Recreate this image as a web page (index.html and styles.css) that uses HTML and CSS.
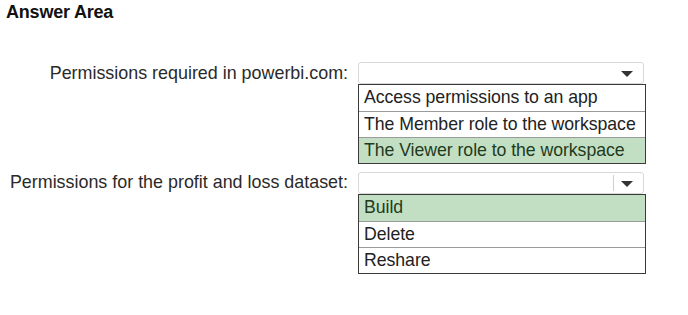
FILE: index.html
```html
<!DOCTYPE html>
<html>
<head>
<meta charset="utf-8">
<link rel="stylesheet" href="styles.css">
</head>
<body>
<h1 class="title">Answer Area</h1>
<div class="qa">
  <div class="question q1">
    <div class="label">Permissions required in powerbi.com:</div>
    <div class="field">
      <div class="select"><span class="arrow"></span></div>
      <ul class="options">
        <li>Access permissions to an app</li>
        <li>The Member role to the workspace</li>
        <li class="chosen">The Viewer role to the workspace</li>
      </ul>
    </div>
  </div>
  <div class="question q2">
    <div class="label">Permissions for the profit and loss dataset:</div>
    <div class="field">
      <div class="select split"><span class="arrow"></span></div>
      <ul class="options">
        <li class="chosen">Build</li>
        <li>Delete</li>
        <li>Reshare</li>
      </ul>
    </div>
  </div>
</div>
</body>
</html>
```
FILE: styles.css
```css
html, body {
  margin: 0;
  padding: 0;
  background: #ffffff;
}
body {
  font-family: "Liberation Sans", Arial, sans-serif;
  color: #222222;
  width: 688px;
  height: 315px;
  overflow: hidden;
}
.title {
  margin: 0;
  padding: 2px 0 0 6px;
  font-size: 18px;
  line-height: 21px;
  font-weight: bold;
  color: #111111;
  letter-spacing: -0.2px;
}
.qa {
  display: flex;
  flex-direction: column;
  gap: 8px;
  padding-top: 39px;
}
.question {
  display: flex;
  align-items: flex-start;
}
.label {
  width: 348px;
  text-align: right;
  font-size: 17.9px;
  line-height: 21px;
  color: #2a2a2a;
}
.q1 .label { padding-top: 1px; }
.q2 .label { padding-top: 0; }
.field {
  margin-left: 10px;
  width: 288px;
  display: flex;
  flex-direction: column;
}
.select {
  position: relative;
  height: 20px;
  border: 1px solid #d8d8d8;
  border-radius: 3px;
  background: #ffffff;
  width: 284px;
}
.split::after {
  content: "";
  position: absolute;
  left: 254px;
  top: 2px;
  bottom: 2px;
  width: 1px;
  background: #cfcfcf;
}
.arrow {
  position: absolute;
  left: 262px;
  top: 8px;
  width: 0;
  height: 0;
  border-left: 6px solid transparent;
  border-right: 6px solid transparent;
  border-top: 6px solid #333333;
}
.options {
  list-style: none;
  margin: 0;
  padding: 0;
  border: 1px solid #3a3a3a;
}
.options li {
  height: 25px;
  line-height: 25px;
  padding-left: 5px;
  font-size: 17.7px;
  color: #222222;
  border-top: 1px solid #9a9a9a;
  letter-spacing: -0.05px;
}
.options li:first-child {
  border-top: none;
  height: 26px;
}
.options li.chosen {
  background: #c3dfc3;
  color: #1f3a20;
}
```
